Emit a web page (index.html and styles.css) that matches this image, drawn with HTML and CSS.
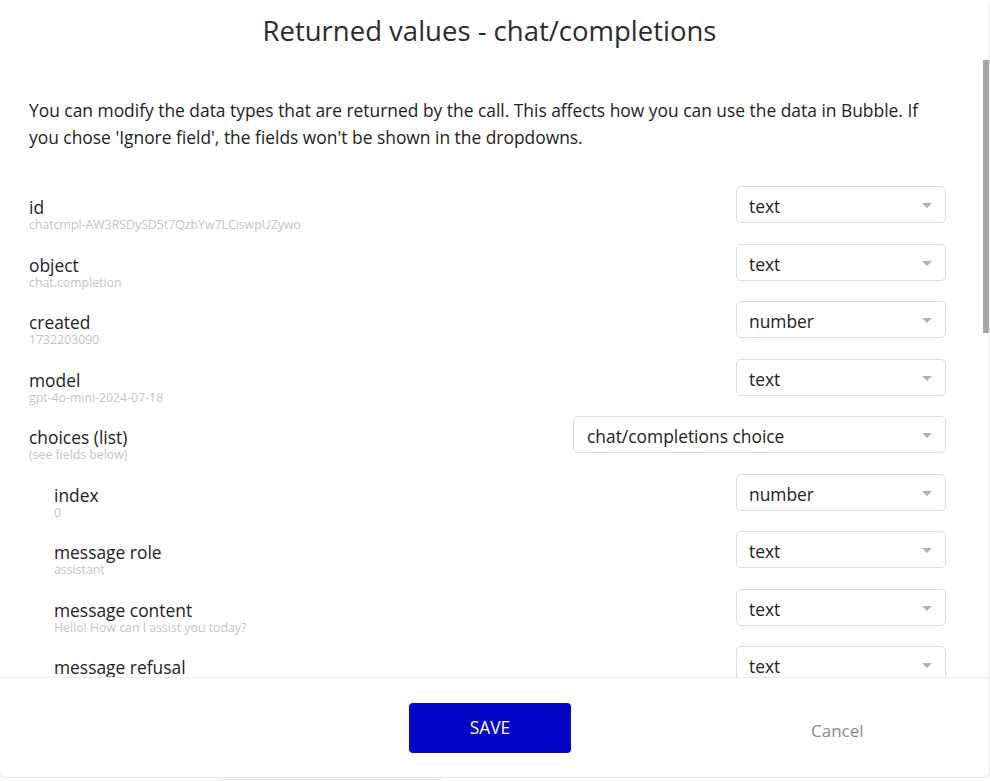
FILE: index.html
```html
<!DOCTYPE html>
<html>
<head>
<meta charset="utf-8">
<link rel="stylesheet" href="styles.css">
</head>
<body>
<div class="modal">
  <div class="modal-head">
    <h1 class="title">Returned values - chat/completions</h1>
  </div>
  <div class="body-wrap">
    <div class="modal-body">
      <p class="intro">You can modify the data types that are returned by the call. This affects how you can use the data in Bubble. If you chose 'Ignore field', the fields won't be shown in the dropdowns.</p>
      <div class="fields">
        <div class="field">
          <div class="label"><div class="name">id</div><div class="sample">chatcmpl-AW3RSDySD5t7QzbYw7LCiswpUZywo</div></div>
          <div class="select"><span>text</span><i class="caret"></i></div>
        </div>
        <div class="field">
          <div class="label"><div class="name">object</div><div class="sample">chat.completion</div></div>
          <div class="select"><span>text</span><i class="caret"></i></div>
        </div>
        <div class="field">
          <div class="label"><div class="name">created</div><div class="sample">1732203090</div></div>
          <div class="select"><span>number</span><i class="caret"></i></div>
        </div>
        <div class="field">
          <div class="label"><div class="name">model</div><div class="sample">gpt-4o-mini-2024-07-18</div></div>
          <div class="select"><span>text</span><i class="caret"></i></div>
        </div>
        <div class="field">
          <div class="label"><div class="name">choices (list)</div><div class="sample">(see fields below)</div></div>
          <div class="select wide"><span>chat/completions choice</span><i class="caret"></i></div>
        </div>
        <div class="field nested">
          <div class="label"><div class="name">index</div><div class="sample">0</div></div>
          <div class="select"><span>number</span><i class="caret"></i></div>
        </div>
        <div class="field nested">
          <div class="label"><div class="name">message role</div><div class="sample">assistant</div></div>
          <div class="select"><span>text</span><i class="caret"></i></div>
        </div>
        <div class="field nested">
          <div class="label"><div class="name">message content</div><div class="sample">Hello! How can I assist you today?</div></div>
          <div class="select"><span>text</span><i class="caret"></i></div>
        </div>
        <div class="field nested">
          <div class="label"><div class="name">message refusal</div></div>
          <div class="select"><span>text</span><i class="caret"></i></div>
        </div>
      </div>
    </div>
    <div class="scroll-thumb"></div>
  </div>
  <div class="modal-foot">
    <button class="btn-save">SAVE</button>
    <button class="btn-cancel">Cancel</button>
  </div>
</div>
<div class="peek"></div>
</body>
</html>
```

FILE: styles.css
```css
* { box-sizing: border-box; }

html, body {
  margin: 0;
  padding: 0;
  background: #ffffff;
  overflow: hidden;
}

body {
  font-family: "Open Sans", "Noto Sans", sans-serif;
  color: #222222;
}

.modal {
  width: 991px;
  height: 778px;
  margin-left: -1px;
  border: 1px solid #e9e9ec;
  border-top: none;
  border-radius: 0 6px 6px 6px;
  background: #ffffff;
  display: flex;
  flex-direction: column;
}

.modal-head {
  height: 60px;
  flex: none;
  display: flex;
  align-items: center;
  justify-content: center;
  padding-right: 10px;
}

.title {
  margin: 0;
  font-size: 27.5px;
  font-weight: 400;
  color: #2b2b2b;
}

.body-wrap {
  flex: 1;
  min-height: 0;
  position: relative;
}

.modal-body {
  height: 100%;
  overflow-y: auto;
  scrollbar-width: none;
  padding: 37px 43px 40px 29px;
}

.modal-body::-webkit-scrollbar {
  display: none;
}

.scroll-thumb {
  position: absolute;
  top: 0;
  right: 0;
  width: 6px;
  height: 273px;
  background: #a6a6a6;
}

.intro {
  margin: 0 0 35px;
  font-size: 17.4px;
  line-height: 27px;
  color: #222222;
}

.fields {
  display: flex;
  flex-direction: column;
  gap: 20.5px;
}

.field {
  display: flex;
  align-items: flex-start;
  justify-content: space-between;
  height: 37px;
}

.label {
  padding-top: 10px;
}

.field.nested .label {
  padding-left: 25px;
}

.name {
  font-size: 17.4px;
  line-height: 22px;
  color: #222222;
  white-space: nowrap;
}

.sample {
  font-size: 12.3px;
  line-height: 14px;
  color: #c4c4c4;
  white-space: nowrap;
}

.select {
  flex: none;
  width: 210px;
  height: 37px;
  border: 1px solid #dcdcdc;
  border-radius: 5px;
  display: flex;
  align-items: center;
  justify-content: space-between;
  padding: 3px 13px 0 12px;
  font-size: 17.4px;
  color: #222222;
}

.select.wide {
  width: 373px;
  padding-left: 13px;
}

.caret {
  width: 0;
  height: 0;
  border-left: 5.5px solid transparent;
  border-right: 5.5px solid transparent;
  border-top: 5px solid #a9b3bf;
  margin-top: -1px;
}

.modal-foot {
  height: 100px;
  flex: none;
  border-top: 1px solid #ececef;
  display: flex;
  align-items: center;
  padding-left: 409px;
}

.btn-save {
  width: 162px;
  height: 50px;
  border: none;
  border-radius: 4px;
  background: #0606c9;
  color: #ffffff;
  font-family: "Open Sans", "Noto Sans", sans-serif;
  font-size: 17.4px;
  padding: 0 0 1px;
}

.btn-cancel {
  margin-left: 240px;
  border: none;
  background: none;
  padding: 0;
  font-family: "Open Sans", "Noto Sans", sans-serif;
  font-size: 17px;
  color: #8a8a8a;
  margin-top: 6px;
}

.peek {
  width: 222px;
  height: 10px;
  margin: 1px 0 0 219px;
  border: 1px solid #e6e4f2;
  border-radius: 3px;
}
```
